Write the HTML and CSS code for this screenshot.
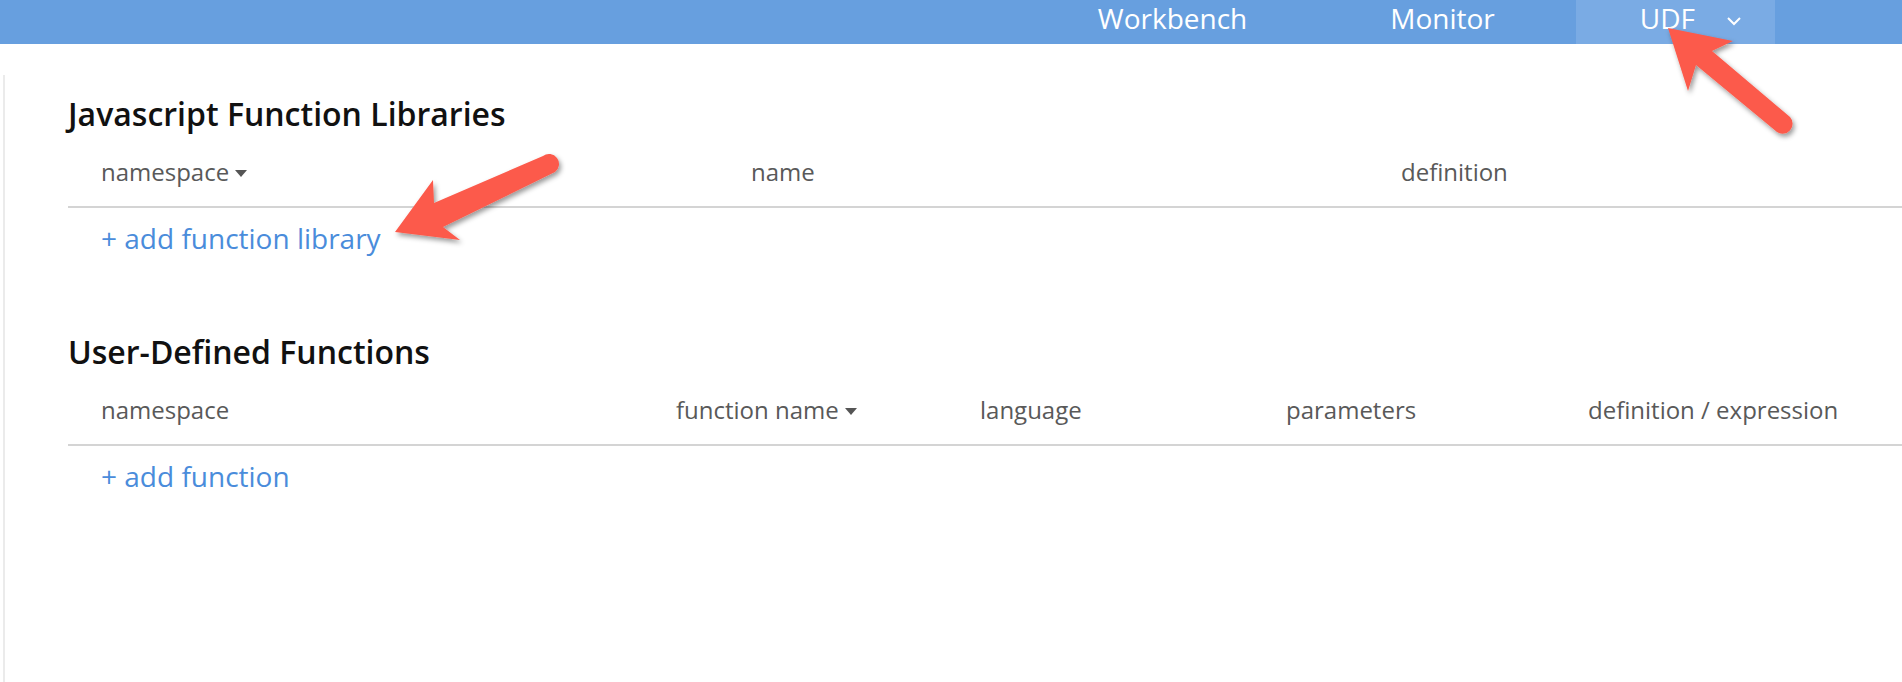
FILE: index.html
```html
<!DOCTYPE html>
<html lang="en">
<head>
<meta charset="utf-8">
<title>UDF</title>
<link rel="stylesheet" href="styles.css">
</head>
<body>
<header class="topnav">
  <a class="nav-item first">Workbench</a>
  <a class="nav-item">Monitor</a>
  <a class="nav-item active">UDF
    <svg class="chev" width="16" height="10" viewBox="0 0 16 10"><path d="M2 2 L8 8 L14 2" fill="none" stroke="#fff" stroke-width="2"/></svg>
  </a>
</header>
<main class="content">
  <section class="block">
    <h2 class="title">Javascript Function Libraries</h2>
    <div class="thead lib-cols">
      <div class="th">namespace<span class="caret"></span></div>
      <div class="th">name</div>
      <div class="th">definition</div>
    </div>
    <div class="addrow"><a class="addlink">+ add function library</a></div>
  </section>
  <section class="block second">
    <h2 class="title">User-Defined Functions</h2>
    <div class="thead udf-cols">
      <div class="th">namespace</div>
      <div class="th">function name<span class="caret"></span></div>
      <div class="th">language</div>
      <div class="th">parameters</div>
      <div class="th">definition / expression</div>
    </div>
    <div class="addrow"><a class="addlink">+ add function</a></div>
  </section>
</main>
<svg class="arrows" width="1902" height="682" viewBox="0 0 1902 682">
  <defs>
    <filter id="sh" x="-20%" y="-20%" width="140%" height="140%">
      <feDropShadow dx="2" dy="3" stdDeviation="2.5" flood-color="#000" flood-opacity="0.4"/>
    </filter>
  </defs>
  <path filter="url(#sh)" fill="#fc5a4b" d="M395,232 L433,180 L434,203 L543,156 A10,10 0 0 1 555,172 L443,227 L460,240 Z"/>
  <path filter="url(#sh)" fill="#fc5a4b" d="M1668,28 L1733,41 L1712,51 L1790,117 A10,10 0 0 1 1777,132 L1696,65 L1688,91 Z"/>
</svg>
</body>
</html>
```

FILE: styles.css
```css
html, body {
  margin: 0;
  padding: 0;
}
body {
  font-family: "Open Sans", "Noto Sans", sans-serif;
  background: #fff;
  overflow: hidden;
  position: relative;
  height: 682px;
}
.topnav {
  height: 44px;
  background: #679fdf;
  display: flex;
  justify-content: flex-end;
  gap: 17px;
  padding-right: 127px;
}
.nav-item {
  display: flex;
  align-items: center;
  padding: 0 64px 7px;
  height: 37px;
  line-height: 37px;
  font-size: 28px;
  color: #fff;
}
.nav-item.first {
  padding-right: 62px;
}
.nav-item.active {
  background: #7aabe4;
  padding-right: 33px;
}
.chev {
  margin-left: 31px;
  margin-top: 4px;
}
.content {
  margin: 31px 0 0 3px;
  border-left: 2px solid #ebebeb;
  padding: 19px 0 200px 63px;
}
.title {
  margin: 0;
  font-size: 32px;
  line-height: 40px;
  font-weight: 600;
  color: #111;
}
.thead {
  display: grid;
  border-bottom: 2px solid #d4d4d4;
  padding: 21px 0 17px;
}
.lib-cols { grid-template-columns: 650px 650px 1fr; }
.udf-cols { grid-template-columns: 575px 304px 306px 302px 1fr; }
.th {
  padding-left: 33px;
  font-size: 24px;
  line-height: 34px;
  color: #595959;
  white-space: nowrap;
  display: flex;
  align-items: center;
}
.caret {
  display: inline-block;
  width: 0;
  height: 0;
  margin-left: 6px;
  margin-top: 3px;
  border-left: 6px solid transparent;
  border-right: 6px solid transparent;
  border-top: 7px solid #555;
}
.addrow {
  padding: 11px 0 0 33px;
}
.addlink {
  font-size: 28px;
  line-height: 38px;
  color: #4a8cdb;
}
.second {
  margin-top: 75px;
}
.arrows {
  position: absolute;
  left: 0;
  top: 0;
  pointer-events: none;
}
```
